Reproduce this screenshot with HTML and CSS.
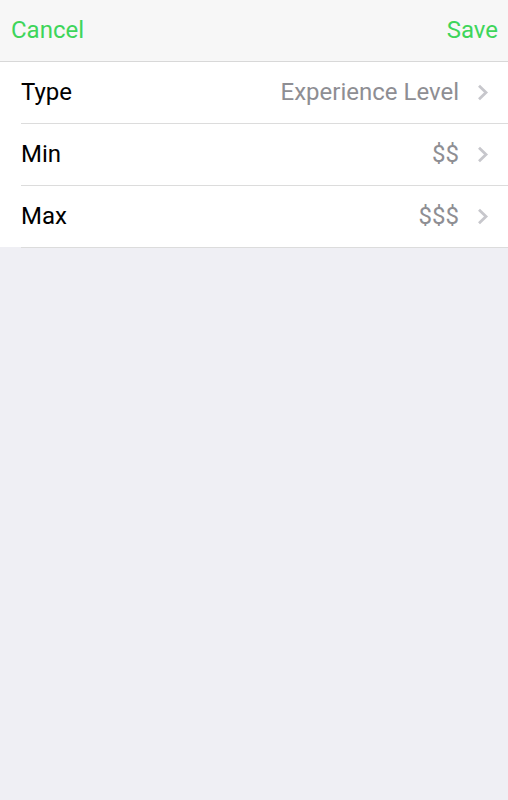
FILE: index.html
```html
<!DOCTYPE html>
<html>
<head>
<meta charset="utf-8">
<link rel="stylesheet" href="styles.css">
</head>
<body>
<header class="nav">
  <span class="nav-btn">Cancel</span>
  <span class="nav-btn">Save</span>
</header>
<div class="list">
  <div class="row">
    <div class="row-inner">
      <span class="label">Type</span>
      <span class="value">Experience Level</span>
      <svg class="chev" width="12" height="17" viewBox="0 0 12 17"><path d="M2 1.8 L9 8.5 L2 15.2" fill="none" stroke="#c7c7cc" stroke-width="2.8"/></svg>
    </div>
  </div>
  <div class="row">
    <div class="row-inner">
      <span class="label">Min</span>
      <span class="value">$$</span>
      <svg class="chev" width="12" height="17" viewBox="0 0 12 17"><path d="M2 1.8 L9 8.5 L2 15.2" fill="none" stroke="#c7c7cc" stroke-width="2.8"/></svg>
    </div>
  </div>
  <div class="row">
    <div class="row-inner">
      <span class="label">Max</span>
      <span class="value">$$$</span>
      <svg class="chev" width="12" height="17" viewBox="0 0 12 17"><path d="M2 1.8 L9 8.5 L2 15.2" fill="none" stroke="#c7c7cc" stroke-width="2.8"/></svg>
    </div>
  </div>
</div>
</body>
</html>
```
FILE: styles.css
```css
html, body {
  margin: 0;
  padding: 0;
  background: #efeff4;
  font-family: Roboto, "Liberation Sans", sans-serif;
  height: 100%;
}
.nav {
  height: 59px;
  padding: 0 10px 2px 11px;
  background: #f7f7f7;
  border-bottom: 1px solid #d8d8d8;
  display: flex;
  align-items: center;
  justify-content: space-between;
  box-sizing: content-box;
}
.nav-btn {
  color: #3ed55a;
  font-size: 24px;
}
.list {
  background: #fff;
}
.row {
  padding-left: 21px;
}
.row:last-child {
  background: linear-gradient(#fff calc(100% - 1px), #efeff4 0);
}
.row-inner {
  height: 59px;
  padding: 0 19px 2px 0;
  border-bottom: 1px solid #dcdcdc;
  display: flex;
  align-items: center;
}
.label {
  font-size: 24px;
  color: #000;
  flex: 1;
}
.value {
  font-size: 24px;
  color: #8e8e93;
  margin-right: 18px;
}
.chev {
  display: block;
  margin-top: 2px;
}
```
